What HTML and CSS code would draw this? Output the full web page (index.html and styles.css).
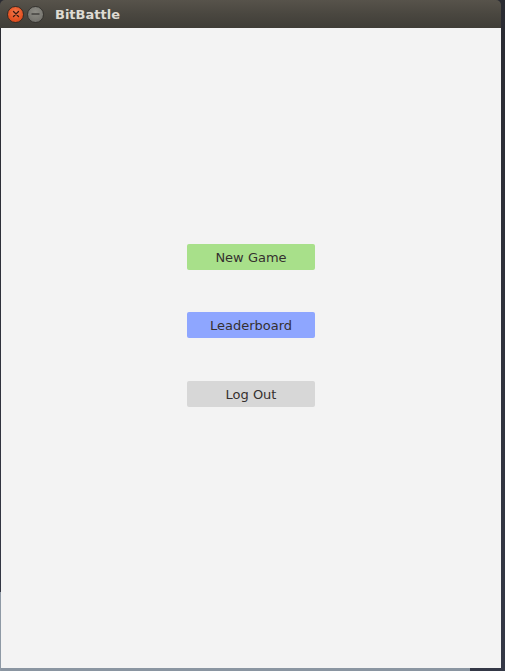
FILE: index.html
```html
<!DOCTYPE html>
<html>
<head>
<meta charset="utf-8">
<title>BitBattle</title>
<link rel="stylesheet" href="styles.css">
</head>
<body>
<div class="window">
  <div class="titlebar">
    <div class="controls">
      <span class="ctl close">
        <svg width="8" height="8" viewBox="0 0 8 8"><path d="M1.5 1.5 L6.5 6.5 M6.5 1.5 L1.5 6.5" stroke="#3a1a10" stroke-width="1.3" stroke-linecap="round"/></svg>
      </span>
      <span class="ctl minimize">
        <svg width="9" height="2" viewBox="0 0 9 2"><path d="M0.5 1 H8.5" stroke="#3a3935" stroke-width="1.3"/></svg>
      </span>
    </div>
    <span class="title">BitBattle</span>
  </div>
  <div class="content">
    <div class="menu">
      <button class="btn btn-new">New Game</button>
      <button class="btn btn-board">Leaderboard</button>
      <button class="btn btn-logout">Log Out</button>
    </div>
  </div>
</div>
</body>
</html>
```
FILE: styles.css
```css
html, body {
  margin: 0;
  padding: 0;
}
body {
  width: 505px;
  height: 671px;
  overflow: hidden;
  background:
    linear-gradient(to bottom, transparent 592px, #8e99a5 592px) left top / 1px 100% no-repeat,
    linear-gradient(to bottom, transparent 668px, #8a95a1 668px) left top / 470px 100% no-repeat,
    linear-gradient(to bottom, #2a2b32 0, #343846 100%);
  font-family: "DejaVu Sans", "Liberation Sans", sans-serif;
}
.window {
  width: 501px;
  height: 668px;
  display: flex;
  flex-direction: column;
}
.titlebar {
  height: 28px;
  flex: 0 0 28px;
  display: flex;
  align-items: center;
  border-radius: 5px 5px 0 0;
  background: linear-gradient(to bottom, #57534b 0, #4a4740 50%, #3f3d37 100%);
  box-sizing: border-box;
  padding-left: 7px;
}
.controls {
  display: flex;
  gap: 3px;
  align-items: center;
}
.ctl {
  width: 17px;
  height: 17px;
  border-radius: 50%;
  display: flex;
  align-items: center;
  justify-content: center;
  box-sizing: border-box;
}
.close {
  background: radial-gradient(circle at 50% 35%, #f37a4e 0, #e65525 55%, #d2461a 100%);
  border: 1px solid #3a2a22;
}
.minimize {
  background: radial-gradient(circle at 50% 35%, #8e8d86 0, #7a7973 60%, #6a6964 100%);
  border: 1px solid #35332f;
}
.title {
  margin-left: 11px;
  color: #dfdbd2;
  font-weight: bold;
  font-size: 13px;
  line-height: 28px;
  padding-top: 1px;
}
.content {
  flex: 1;
  margin-left: 1px;
  background: #f3f3f3;
  display: flex;
  justify-content: center;
}
.menu {
  padding-top: 216px;
  display: flex;
  flex-direction: column;
  gap: 42px;
}
.btn {
  width: 128px;
  height: 26px;
  border: none;
  border-radius: 2px;
  font-family: "DejaVu Sans", "Liberation Sans", sans-serif;
  font-size: 13px;
  color: #35302f;
  padding: 0;
  margin: 0;
}
.btn-new {
  background: #a8e08a;
}
.btn-board {
  background: #8ea6ff;
}
.btn-logout {
  background: #d7d7d7;
  margin-top: 1px;
}
```
